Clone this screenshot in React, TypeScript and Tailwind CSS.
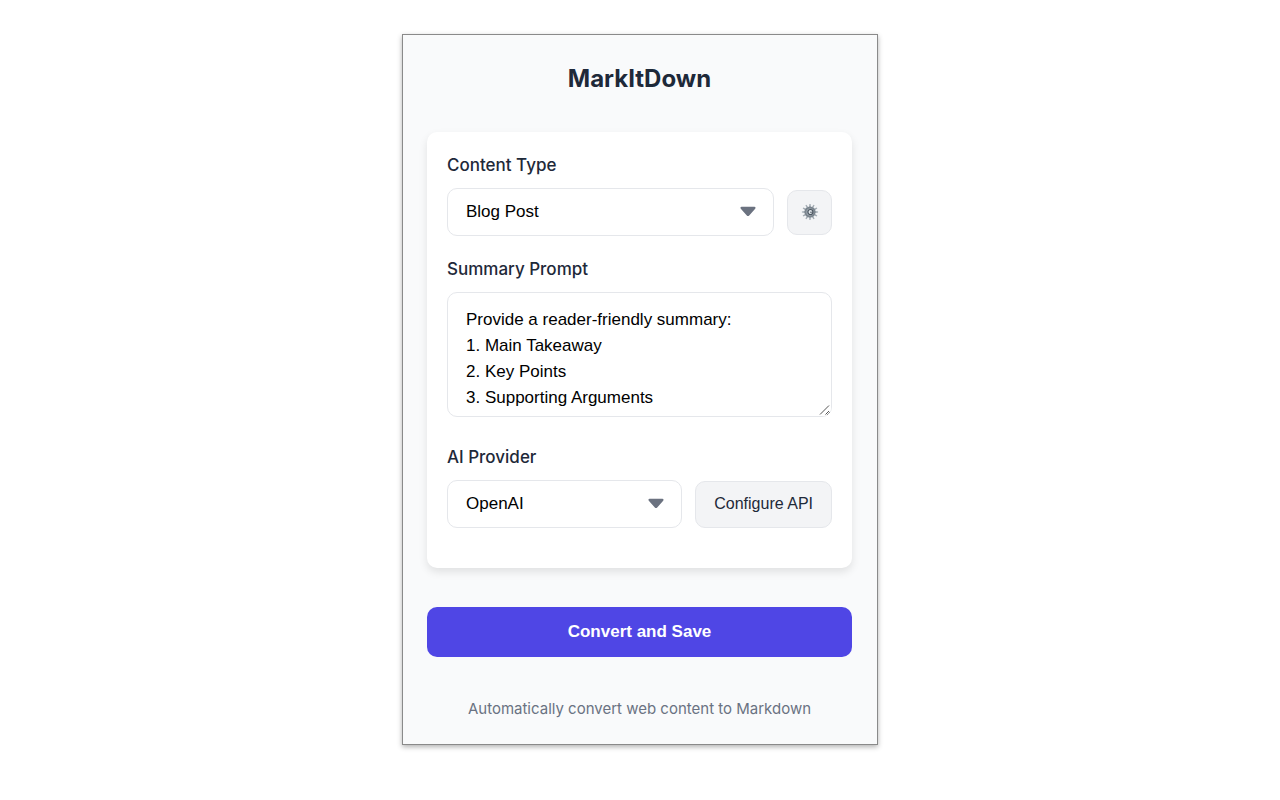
import { ReactNode, useState } from "react";

type Option = {
  value: string;
  label: string;
};

const contentTypes: Option[] = [
  { value: "blog", label: "Blog Post" },
];

const providers: Option[] = [
  { value: "openai", label: "OpenAI" },
];

const defaultPrompt = `Provide a reader-friendly summary:
1. Main Takeaway
2. Key Points
3. Supporting Arguments`;

// angles of the gear teeth, in degrees
const teeth = [0, 30, 60, 90, 120, 150, 180, 210, 240, 270, 300, 330];

function GearIcon() {
  return (
    <svg width="18" height="18" viewBox="0 0 18 18" aria-hidden="true">
      {teeth.map((angle) => (
        <path
          key={angle}
          d="M8.1 4 L8.4 0.9 H9.6 L9.9 4 Z"
          fill="#a1aab2"
          transform={`rotate(${angle} 9 9)`}
        />
      ))}
      <circle cx="9" cy="9" r="4.6" fill="#a3adb5" stroke="#7b858e" strokeWidth="2" />
      <circle cx="9.4" cy="9" r="2.5" fill="#e3e9ed" stroke="#4b5560" strokeWidth="1.2" />
      <circle cx="10" cy="9.2" r="0.8" fill="#4b5560" />
    </svg>
  );
}

function Label({ htmlFor, children }: { htmlFor: string; children: ReactNode }) {
  return (
    <label htmlFor={htmlFor} className="mb-[9px] block text-[17px] leading-[27px] font-medium text-gray-800">
      {children}
    </label>
  );
}

function Select({ id, options }: { id: string; options: Option[] }) {
  return (
    <div className="relative min-w-0 flex-1">
      <select
        id={id}
        className="h-12 w-full appearance-none rounded-[10px] border border-gray-200 bg-white pr-10 pl-[18px] font-['Liberation_Sans',Arial,sans-serif] text-[17px] text-black"
      >
        {options.map((option) => (
          <option key={option.value} value={option.value}>
            {option.label}
          </option>
        ))}
      </select>
      <svg
        className="pointer-events-none absolute top-[18px] right-[18px]"
        width="16"
        height="11"
        viewBox="0 0 16 11"
        aria-hidden="true"
      >
        <path
          d="M1.6 0.8 H14.4 C15.6 0.8 15.9 1.9 15.2 2.7 L9.2 9.5 C8.5 10.3 7.5 10.3 6.8 9.5 L0.8 2.7 C0.1 1.9 0.4 0.8 1.6 0.8 Z"
          fill="#6b7280"
        />
      </svg>
    </div>
  );
}

function App() {
  const [prompt, setPrompt] = useState(defaultPrompt);

  return (
    <div className="min-h-screen bg-white px-4 py-[34px] font-['Inter',sans-serif]">
      <main className="mx-auto max-w-[476px] border border-[#8a8a8a] bg-gray-50 py-6 pr-[25px] pl-6 shadow-[0_2px_5px_rgba(0,0,0,0.3)]">
        <h1 className="mb-[33px] text-center text-2xl leading-10 font-bold text-gray-800">MarkItDown</h1>

        <section className="rounded-[10px] bg-white p-5 shadow-[0_4px_8px_rgba(0,0,0,0.1)]">
          <div className="mb-5">
            <Label htmlFor="content-type">Content Type</Label>
            <div className="flex items-center gap-[13px]">
              <Select id="content-type" options={contentTypes} />
              <button
                type="button"
                aria-label="Settings"
                className="flex size-[45px] items-center justify-center rounded-[10px] border border-gray-200 bg-gray-100"
              >
                <GearIcon />
              </button>
            </div>
          </div>

          <div className="mb-[27px]">
            <Label htmlFor="prompt">Summary Prompt</Label>
            <div className="relative">
              <textarea
                id="prompt"
                value={prompt}
                onChange={(e) => setPrompt(e.target.value)}
                className="block h-[125px] w-full resize-y overflow-hidden rounded-[10px] border border-gray-200 bg-white px-[18px] py-[14px] font-['Liberation_Sans',Arial,sans-serif] text-[17px] leading-[26px] text-black"
              />
              {/* grip drawn over the native resize handle */}
              <svg
                className="pointer-events-none absolute right-px bottom-px"
                width="12"
                height="12"
                viewBox="0 0 12 12"
                aria-hidden="true"
              >
                <path d="M0 0 H12 V4 C12 8 8 12 4 12 H0 Z" fill="#fff" />
                <path d="M1 10.5 L10 1.5 M6.5 10.5 L10 7" stroke="#555" strokeWidth="1" />
              </svg>
            </div>
          </div>

          <div className="mb-5">
            <Label htmlFor="provider">AI Provider</Label>
            <div className="flex items-center gap-[13px]">
              <Select id="provider" options={providers} />
              <button
                type="button"
                className="h-[47px] rounded-[10px] border border-gray-200 bg-gray-100 px-[18px] font-['Liberation_Sans',Arial,sans-serif] text-[16px] text-gray-800"
              >
                Configure API
              </button>
            </div>
          </div>
        </section>

        <button
          type="button"
          className="mt-[39px] h-[50px] w-full rounded-[10px] bg-[#4f46e5] font-['Liberation_Sans',Arial,sans-serif] text-[17px] font-bold text-white"
        >
          Convert and Save
        </button>

        <p className="mt-10 text-center text-[15px] leading-[23px] text-gray-500">
          Automatically convert web content to Markdown
        </p>
      </main>
    </div>
  );
}

export default App;
